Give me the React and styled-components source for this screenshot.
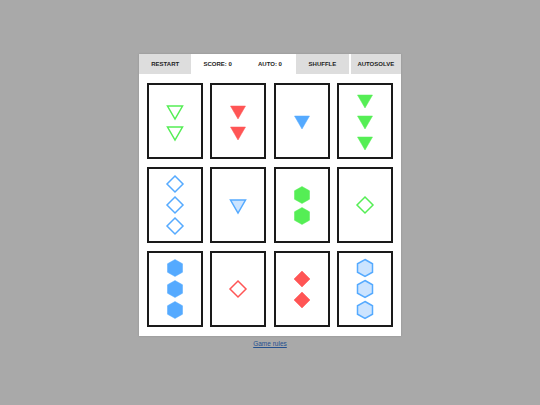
import React from "react";
import styled, { createGlobalStyle } from "styled-components";

const Global = createGlobalStyle`
  html, body { margin: 0; padding: 0; }
  body {
    background: #a9a9a9;
    font-family: "Liberation Sans", Arial, sans-serif;
    width: 540px;
    height: 405px;
    overflow: hidden;
  }
`;

const Page = styled.div`
  display: flex;
  flex-direction: column;
  align-items: center;
  padding-top: 54px;
`;

const Panel = styled.div`
  width: 262px;
  background: #fff;
  box-shadow: 0 0 2px rgba(0, 0, 0, 0.15);
`;

const Toolbar = styled.div`
  display: grid;
  grid-template-columns: repeat(5, 1fr);
  height: 20px;
`;

const Button = styled.div`
  display: flex;
  align-items: center;
  justify-content: center;
  background: ${(p) => (p.$plain ? "#fff" : "#dddddd")};
  margin-left: ${(p) => (p.$gapLeft ? "2px" : "0")};
  font-size: 6px;
  font-weight: bold;
  color: #222;
`;

const Grid = styled.div`
  display: grid;
  grid-template-columns: repeat(4, 1fr);
  grid-auto-rows: 76px;
  column-gap: 7.3px;
  row-gap: 8px;
  padding: 9px 8px 9px 8px;
`;

const Card = styled.div`
  border: 2px solid #1a1a1a;
  background: #fff;
  display: flex;
  flex-direction: column;
  align-items: center;
  justify-content: center;
  gap: 1px;
`;

const Symbol = styled.svg`
  width: 20px;
  height: 20px;
  display: block;
`;

const RulesLink = styled.a`
  margin-top: 4px;
  font-size: 6.5px;
  color: #24508f;
  text-decoration: underline;
`;

const COLORS = { red: "#ff5555", green: "#55ee55", blue: "#55aaff" };
const LIGHT = { red: "#ffcccc", green: "#ccf8cc", blue: "#cce4ff" };

const SHAPES = {
  triangle: "2.5,5 17.5,5 10,18",
  diamond: "10,2 18,10 10,18 2,10",
  hexagon: "10,1.5 17.5,5.75 17.5,14.25 10,18.5 2.5,14.25 2.5,5.75",
};

function Shape({ shape, color, fill }) {
  const c = COLORS[color];
  const f = fill === "solid" ? c : fill === "shaded" ? LIGHT[color] : "none";
  return (
    <Symbol viewBox="0 0 20 20">
      <polygon
        points={SHAPES[shape]}
        fill={f}
        stroke={c}
        strokeWidth={fill === "solid" ? 0.5 : 1.5}
      />
    </Symbol>
  );
}

const cards = [
  [2, "triangle", "green", "outline"],
  [2, "triangle", "red", "solid"],
  [1, "triangle", "blue", "solid"],
  [3, "triangle", "green", "solid"],
  [3, "diamond", "blue", "outline"],
  [1, "triangle", "blue", "shaded"],
  [2, "hexagon", "green", "solid"],
  [1, "diamond", "green", "outline"],
  [3, "hexagon", "blue", "solid"],
  [1, "diamond", "red", "outline"],
  [2, "diamond", "red", "solid"],
  [3, "hexagon", "blue", "shaded"],
];

export default function App() {
  return (
    <>
      <Global />
      <Page>
        <Panel>
          <Toolbar>
            <Button>RESTART</Button>
            <Button $plain>SCORE: 0</Button>
            <Button $plain>AUTO: 0</Button>
            <Button>SHUFFLE</Button>
            <Button $gapLeft>AUTOSOLVE</Button>
          </Toolbar>
          <Grid>
            {cards.map(([n, shape, color, fill], i) => (
              <Card key={i}>
                {Array.from({ length: n }).map((_, j) => (
                  <Shape key={j} shape={shape} color={color} fill={fill} />
                ))}
              </Card>
            ))}
          </Grid>
        </Panel>
        <RulesLink href="#">Game rules</RulesLink>
      </Page>
    </>
  );
}
